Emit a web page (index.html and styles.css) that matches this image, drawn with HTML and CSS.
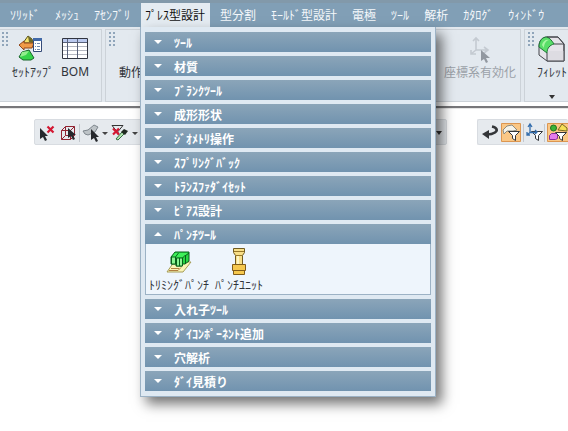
FILE: index.html
```html
<!DOCTYPE html>
<html lang="ja">
<head>
<meta charset="utf-8">
<title>プレス型設計</title>
<link rel="stylesheet" href="styles.css">
</head>
<body>
<nav class="menubar">
  <span class="menu">ｿﾘｯﾄﾞ</span><span class="menu">ﾒｯｼｭ</span><span class="menu">ｱｾﾝﾌﾞﾘ</span><span class="menu active">ﾌﾟﾚｽ型設計</span><span class="menu">型分割</span><span class="menu">ﾓｰﾙﾄﾞ型設計</span><span class="menu">電極</span><span class="menu">ﾂｰﾙ</span><span class="menu">解析</span><span class="menu">ｶﾀﾛｸﾞ</span><span class="menu">ｳｨﾝﾄﾞｳ</span>
</nav>
<div class="ribbon">
  <section class="group first">
    <i class="grip"></i>
    <div class="tool setup">
      <svg width="26" height="26" viewBox="0 0 26 26">
        <path d="M5 8l5-7 4 3 1 4z" fill="#f5e36b" stroke="#57521d"/>
        <path d="M10 1l4 3 1 4-4-1z" fill="#6d6a2a"/>
        <path d="M1 10l5-4v2h10l-2 5H6v2z" fill="#f09a48" stroke="#91471b"/>
        <path d="M1 22l3-5 7-2 5 8-3 2H5z" fill="#36d44a" stroke="#18652b"/>
        <path d="M4 17l7-1-3 4-6 2z" fill="#91ee8d"/>
        <path d="M15.500 3.500h8v13h-8z" fill="#fff" stroke="#354b78"/>
        <path d="M15 3h9v3h-9z" fill="#4169a8"/>
        <path d="M17 8.500h1m1 0h3m-5 3h1m1 0h3m-5 3h1m1 0h3" stroke="#718bb0"/>
      </svg>
      <span>ｾｯﾄｱｯﾌﾟ</span>
    </div>
    <div class="tool bom">
      <svg width="26" height="26" viewBox="0 0 26 26">
        <path d="M.5 3.500h25v20H.5z" fill="#fff" stroke="#30343f"/>
        <path d="M1 4h24v3H1z" fill="#bac9ee"/>
        <path d="M1 11.500h24M1 15.500h24M1 19.500h24" stroke="#b4b8c1"/>
        <path d="M1 7.500h24M5.500 4v19M15.500 4v19" stroke="#59627a"/>
      </svg>
      <span>BOM</span>
    </div>
  </section>
  <section class="group middle">
    <i class="grip"></i>
    <span class="motion">動作</span>
    <div class="tool coord">
      <svg width="26" height="28" viewBox="0 0 26 28">
        <path d="M9 15V4M9 15h11M9 15l-5 4M6 6l3-3 3 3M17 12l4 3-4 3M4 15v4h5" fill="none" stroke="#c4cad1" stroke-width="1.600"/>
        <path d="M14 15v11l3-2 2 4 2-1-2-4h4z" fill="#9298a0"/>
      </svg>
      <span>座標系有効化</span>
    </div>
  </section>
  <section class="group last">
    <i class="grip"></i>
    <div class="tool fillet">
      <svg width="28" height="28" viewBox="0 0 28 28">
        <path d="M9 2h11l6 7v17H9l-8-6v-9c0-5 3-9 8-9z" fill="#e5e3e9" stroke="#42454a"/>
        <path d="M9 16h17v10H9z" fill="#dddce2"/>
        <path d="M9 2c3 1 5 4 7 7-4 1-7 4-7 9l-8-6C1 6 4 2 9 2z" fill="#59de68" stroke="#217439"/>
        <path d="M4 10c1-4 4-6 7-5-4 1-5 5-5 8z" fill="#a8f6a3"/>
        <path d="M9 2h11l6 7v17H9v-8M16 9h10" stroke="#42454a" fill="none"/>
      </svg>
      <span>ﾌｨﾚｯﾄ</span>
      <i class="down"></i>
    </div>
  </section>
</div>
<div class="canvas">
  <div class="strip left">
    <svg width="104" height="25" viewBox="0 0 104 25">
      <path d="M5 8v11l3-2 2 4 2-1-2-4h3z" fill="#26282d"/>
      <path d="M12.500 6.500l6 6m0-6l-6 6" stroke="#d31832" stroke-width="2.200"/>
      <path d="M26.500 10.500h9v9h-9zM26.500 10.500l4-4h9v9l-4 4m0-9l4-4M30.500 6.500v9h9m-9 0l-4 4" fill="none" stroke="#912331"/>
      <path d="M33 8v10l3-2 2 4 2-1-2-4h3z" fill="#26282d"/>
      <path d="M44.500 4v18" stroke="#c3c8ce"/>
      <path d="M48 11l5-1 6-5 4 2-3 5-7 3-3-1z" fill="#bdc3c7" stroke="#7f878e"/>
      <path d="M56 9v11l3-2 2 4 2-1-2-4h3z" fill="#26282d"/>
      <path d="M67 12h6l-3 3zM97 12h6l-3 3z" fill="#444"/>
      <path d="M77 5.500h11l-5 6v3M77 5.500l5 6" fill="none" stroke="#333"/>
      <path d="M78 8.500l6 6m0-6l-6 6" stroke="#d31832" stroke-width="2.200"/>
      <path d="M81 19l6-7 2 2-6 6z" fill="#b2e6b0" stroke="#376d42"/>
      <path d="M86 12l3-3 4 2-3 4z" fill="#202820"/>
    </svg>
    <i class="down end"></i>
  </div>
  <div class="strip right">
    <svg width="91" height="25" viewBox="0 0 91 25">
      <path d="M14 6.500c5 1 6 4 3 6-3 2-5 2-8 2" fill="none" stroke="#343639" stroke-width="2.600"/>
      <path d="M4 14l7-4v9z" fill="#343639"/>
      <path d="M23.500 3.500h19v18h-19zM69.500 3.500h22v18h-22z" fill="#fac785" stroke="#dc9650"/>
      <path d="M45.500 4v18M66.500 4v18" stroke="#c3c8ce"/>
      <path d="M25 10l4-4 5-1 5 5-4 1h-6l-3 3z" fill="#f5f3e9" stroke="#8b8b82"/>
      <path d="M30.500 11.500h11l-4 4v5l-3-2v-3zM53.500 11.500h11l-4 4v5l-3-2v-3z" fill="#fff" stroke="#34363a"/>
      <path d="M52 12.500V5m0 7.500h7m-7 0l-3 2.500M50 7l2-3 2 3m-5 5v3h3m5-5l2 2-2 2" fill="none" stroke="#346dac" stroke-width="1.300"/>
      <circle cx="75.500" cy="8" r="3" fill="#39b438" stroke="#22711f"/>
      <path d="M80 10l4-6 5 4v3z" fill="#f5df57" stroke="#786a22"/>
      <path d="M71.500 15.500l2-2h6v5l-2 1h-6z" fill="#e57cec" stroke="#8b2a9c"/>
      <path d="M77.500 12.500h11l-4 4v4l-3-2v-2z" fill="#fff" stroke="#34363a"/>
    </svg>
  </div>
</div>
<div class="dropdown">
  <div class="head">ﾂｰﾙ</div>
  <div class="head">材質</div>
  <div class="head">ﾌﾞﾗﾝｸﾂｰﾙ</div>
  <div class="head">成形形状</div>
  <div class="head">ｼﾞｵﾒﾄﾘ操作</div>
  <div class="head">ｽﾌﾟﾘﾝｸﾞﾊﾞｯｸ</div>
  <div class="head">ﾄﾗﾝｽﾌｧﾀﾞｲｾｯﾄ</div>
  <div class="head">ﾋﾟｱｽ設計</div>
  <div class="open">
    <div class="head up">ﾊﾟﾝﾁﾂｰﾙ</div>
    <div class="items">
      <div class="item">
        <svg width="26" height="28" viewBox="0 0 26 28">
          <path d="M1 24l7-10h17l-8 10z" fill="#fbf4b5" stroke="#a59d58"/>
          <path d="M5 20.500h8M3 22.500h9l3-3" fill="none" stroke="#b17f3f"/>
          <path d="M5 9l4-5h14v9l-4 3h-3v2h-6v-2H5z" fill="#27d744" stroke="#08601a"/>
          <path d="M6 9l3-4h13l-3 4z" fill="#3ef05a"/>
          <path d="M5.500 9h4v7h-4zM10.500 10h6v8h-6z" fill="#8bf592" stroke="#08601a"/>
          <path d="M16.500 10l3-3v9M9.500 9l3-4M19 8l4-3M13.500 10v8" fill="none" stroke="#08601a"/>
        </svg>
        <span>ﾄﾘﾐﾝｸﾞﾊﾟﾝﾁ</span>
      </div>
      <div class="item">
        <svg width="26" height="28" viewBox="0 0 26 28">
          <path d="M7.500.5h11v4l-2 3v9h-7v-9l-2-3z" fill="#f8df88" stroke="#705b22"/>
          <path d="M6.500 16.500h13v6h-13zM7.500 22.500h11v4h-11z" fill="#f6c84d" stroke="#805b18"/>
          <path d="M8 3.500h10M10 7.500h6" stroke="#987728"/>
          <path d="M12 8v8" stroke="#fff5c2" stroke-width="2"/>
        </svg>
        <span>ﾊﾟﾝﾁﾕﾆｯﾄ</span>
      </div>
    </div>
  </div>
  <div class="head">入れ子ﾂｰﾙ</div>
  <div class="head">ﾀﾞｲｺﾝﾎﾟｰﾈﾝﾄ追加</div>
  <div class="head">穴解析</div>
  <div class="head">ﾀﾞｲ見積り</div>
</div>
</body>
</html>
```
FILE: styles.css
```css
* { box-sizing: border-box; }
body {
  margin: 0;
  width: 568px;
  height: 431px;
  overflow: hidden;
  position: relative;
  background: #fff;
  font: 12px/16px "Noto Sans CJK JP", sans-serif;
  color: #30343a;
  white-space: nowrap;
}
svg { display: block; flex: none; }
.menubar {
  height: 27px;
  padding: 3px 0 0 2.5px;
  display: flex;
  background: linear-gradient(#8299aa 0, #8299aa 3px, #819fb6 3px);
}
.menu { flex: none; padding: 4px 7.5px 0; height: 24px; color: #f5f8fb; }
.menu.active { margin: 0 3px 0 3.5px; padding: 4px 4.500px 0 4px; background: #e5ecf2; color: #111; }
.ribbon {
  height: 82px;
  display: flex;
  gap: 3px;
  padding: 2px 0 6px;
  background: linear-gradient(#e2e8ee 0, #e2e8ee 75px, #fff 75px, #fff 79px, #77777a 79px, #77777a 81px, #e5e5e5 81px);
}
.group { height: 73px; border: 1px solid #ccd2d8; display: flex; flex: none; background: #e3e9ef; }
.first { width: 102px; border-left: 0; }
.middle { width: 416px; }
.last { width: 60px; }
.grip {
  flex: none;
  width: 8px;
  height: 16px;
  margin: 2px 0 0 2px;
  background: radial-gradient(circle at 1px 1px, #90a5ba 1px, transparent 1.4px) 0 0 / 4px 4px;
}
.middle .grip, .last .grip { margin-left: 3px; }
.tool { display: flex; flex-direction: column; align-items: center; padding-top: 5px; }
.tool span { margin-top: 3px; }
.setup { width: 42px; margin-left: 2px; }
.setup svg { margin-left: -4px; }
.bom { width: 30px; margin-left: 6px; }
.bom span { font-family: "Noto Sans", sans-serif; font-size: 12px; }
.motion { margin: 34px 0 0 2px; width: 325px; }
.coord { color: #9ba1a8; }
.coord svg, .fillet svg { margin-bottom: -2px; }
.fillet { width: 30px; margin-left: 1px; }
.down { border: 3px solid transparent; border-top: 4px solid #333; border-bottom: 0; }
.fillet .down { margin-top: 15px; }
.canvas { display: flex; justify-content: space-between; padding-top: 10px; }
.strip { height: 26px; border: 1px solid #d8dce1; border-radius: 2px; background: #e6eaee; display: flex; }
.left { width: 413px; margin-left: 34px; justify-content: space-between; }
.end { margin: 11px 4px 0 0; }
.right { width: 91px; border-right: 0; }
.dropdown {
  position: absolute;
  left: 140px;
  top: 27px;
  width: 296px;
  height: 370px;
  padding: 5px 4px;
  display: flex;
  flex-direction: column;
  gap: 4px;
  background: #dfe9f2;
  border-left: 1px solid #9cb2c5;
  border-right: 1px solid #9cb2c5;
  border-bottom: 1px solid #9cb2c5;
  box-shadow: 6px 7px 12px rgba(0, 0, 0, .55);
}
.head {
  height: 20px;
  flex: none;
  display: flex;
  align-items: center;
  padding-top: 1px;
  color: #fff;
  font-weight: 700;
  background: linear-gradient(#8ba5b9, #7193af);
}
.head::before {
  content: "";
  margin: -2px 12px 0 9px;
  border: 4px solid transparent;
  border-top: 4px solid #fff;
  border-bottom: 0;
}
.head.up::before { border-top: 0; border-bottom: 4px solid #fff; }
.items {
  height: 51px;
  display: flex;
  padding: 4px 3px 0;
  gap: 6px;
  background: #eef5fc;
  border: 1px solid #9cb2c5;
  border-top: 0;
}
.item { display: flex; flex-direction: column; align-items: center; }
.item span { margin-top: 1px; }
```
